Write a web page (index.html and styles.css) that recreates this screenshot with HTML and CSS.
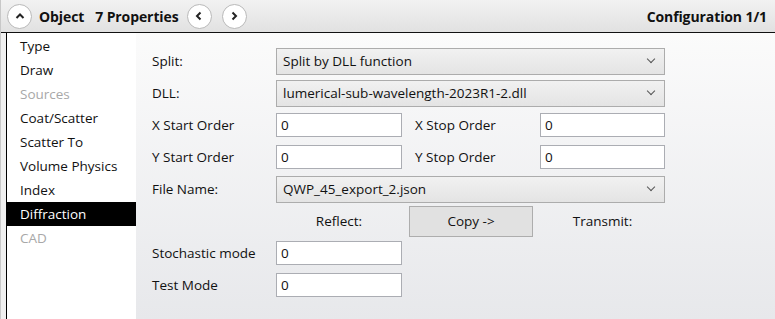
FILE: index.html
```html
<!DOCTYPE html>
<html lang="en">
<head>
    <meta charset="UTF-8">
    <title>Object Properties</title>
    <link rel="stylesheet" href="styles.css">
</head>
<body>
    <div class="window">
        <div class="header">
            <button class="round-btn" aria-label="Collapse">
                <svg width="12" height="12" viewBox="0 0 12 12"><path d="M2.5 8 L6 4.5 L9.5 8" fill="none" stroke="#222" stroke-width="2"/></svg>
            </button>
            <span class="header-title">Object</span>
            <span class="header-title">7 Properties</span>
            <button class="round-btn prev" aria-label="Previous">
                <svg width="12" height="12" viewBox="0 0 12 12"><path d="M7.5 2.5 L4 6 L7.5 9.5" fill="none" stroke="#222" stroke-width="2"/></svg>
            </button>
            <button class="round-btn next" aria-label="Next">
                <svg width="12" height="12" viewBox="0 0 12 12"><path d="M4.5 2.5 L8 6 L4.5 9.5" fill="none" stroke="#222" stroke-width="2"/></svg>
            </button>
            <span class="header-title config">Configuration 1/1</span>
        </div>

        <div class="body">
            <ul class="sidebar">
                <li>Type</li>
                <li>Draw</li>
                <li class="disabled">Sources</li>
                <li>Coat/Scatter</li>
                <li>Scatter To</li>
                <li>Volume Physics</li>
                <li>Index</li>
                <li class="selected">Diffraction</li>
                <li class="disabled">CAD</li>
            </ul>

            <div class="panel">
                <div class="form">
                    <label class="lbl">Split:</label>
                    <div class="select span-4"><span>Split by DLL function</span><span class="chev"></span></div>

                    <label class="lbl">DLL:</label>
                    <div class="select span-4"><span>lumerical-sub-wavelength-2023R1-2.dll</span><span class="chev"></span></div>

                    <label class="lbl">X Start Order</label>
                    <div class="input">0</div>
                    <span></span>
                    <label class="lbl">X Stop Order</label>
                    <div class="input">0</div>

                    <label class="lbl">Y Start Order</label>
                    <div class="input">0</div>
                    <span></span>
                    <label class="lbl">Y Stop Order</label>
                    <div class="input">0</div>

                    <label class="lbl">File Name:</label>
                    <div class="select span-4"><span>QWP_45_export_2.json</span><span class="chev"></span></div>

                    <span></span>
                    <span class="center-lbl">Reflect:</span>
                    <div class="btn-cell"><button class="copy-btn">Copy -&gt;</button></div>
                    <span class="center-lbl">Transmit:</span>

                    <label class="lbl">Stochastic mode</label>
                    <div class="input">0</div>
                    <span class="rest"></span>

                    <label class="lbl">Test Mode</label>
                    <div class="input">0</div>
                    <span class="rest"></span>
                </div>
            </div>
        </div>
    </div>
</body>
</html>
```

FILE: styles.css
```css
* {
    margin: 0;
    padding: 0;
    box-sizing: border-box;
    font-family: 'Open Sans', 'Noto Sans', sans-serif;
}

body {
    width: 775px;
    height: 319px;
    overflow: hidden;
    background: #f0f0f0;
    color: #111;
    font-size: 13.5px;
}

.window {
    height: 100%;
    display: flex;
    flex-direction: column;
    border-left: 1px solid #c8c8c8;
}

/* header bar */
.header {
    height: 33px;
    flex-shrink: 0;
    display: flex;
    align-items: center;
    padding: 0 8px 0 6px;
    background: linear-gradient(#f2f2f2, #e1e1e1);
    border-bottom: 1px solid #111;
}

.round-btn {
    width: 25px;
    height: 25px;
    border-radius: 50%;
    border: 1px solid #b9b9b9;
    background: #fff;
    display: flex;
    align-items: center;
    justify-content: center;
    flex-shrink: 0;
}

.round-btn.prev {
    margin-left: 2px;
}

.round-btn.next {
    margin-left: 10px;
}

.header-title {
    font-weight: 700;
    font-size: 14px;
    margin-left: 7px;
    letter-spacing: -0.1px;
}

.header-title + .header-title {
    margin-left: 11px;
    margin-right: 6px;
}

.header-title.config {
    margin-left: auto;
}

/* main area */
.body {
    flex: 1;
    display: flex;
    padding-left: 5px;
}

.sidebar {
    list-style: none;
    width: 130px;
    flex-shrink: 0;
    background: #fff;
    border-left: 1px solid #000;
    padding-top: 1px;
}

.sidebar li {
    height: 24px;
    line-height: 24px;
    padding-left: 13px;
    white-space: nowrap;
}

.sidebar li.disabled {
    color: #a8a8a8;
}

.sidebar li.selected {
    background: #000;
    color: #fff;
}

.panel {
    flex: 1;
    background: linear-gradient(#fbfbfb, #e7e8eb);
    padding: 12px 0 0 16px;
}

.form {
    display: grid;
    grid-template-columns: 124px 126px 13px 125px 125px;
    grid-auto-rows: 32px;
    align-items: center;
}

.lbl {
    white-space: nowrap;
}

.span-4 {
    grid-column: span 4;
}

.select {
    height: 27px;
    border: 1px solid #acacac;
    background: linear-gradient(#f1f1f1, #e4e4e4);
    display: flex;
    align-items: center;
    justify-content: space-between;
    padding: 0 10px 0 6px;
}

.chev {
    width: 6px;
    height: 6px;
    border-right: 1.5px solid #555;
    border-bottom: 1.5px solid #555;
    transform: rotate(45deg);
    margin-top: -4px;
}

.input {
    height: 24px;
    background: #fff;
    border: 1px solid #abadb3;
    padding-left: 4px;
    line-height: 22px;
}

.center-lbl {
    text-align: center;
}

.btn-cell {
    grid-column: span 2;
    display: flex;
    justify-content: center;
}

.copy-btn {
    width: 124px;
    height: 31px;
    background: #e1e1e1;
    border: 1px solid #adadad;
    font-size: 13.5px;
    color: #111;
}

.rest {
    grid-column: span 3;
}
```
